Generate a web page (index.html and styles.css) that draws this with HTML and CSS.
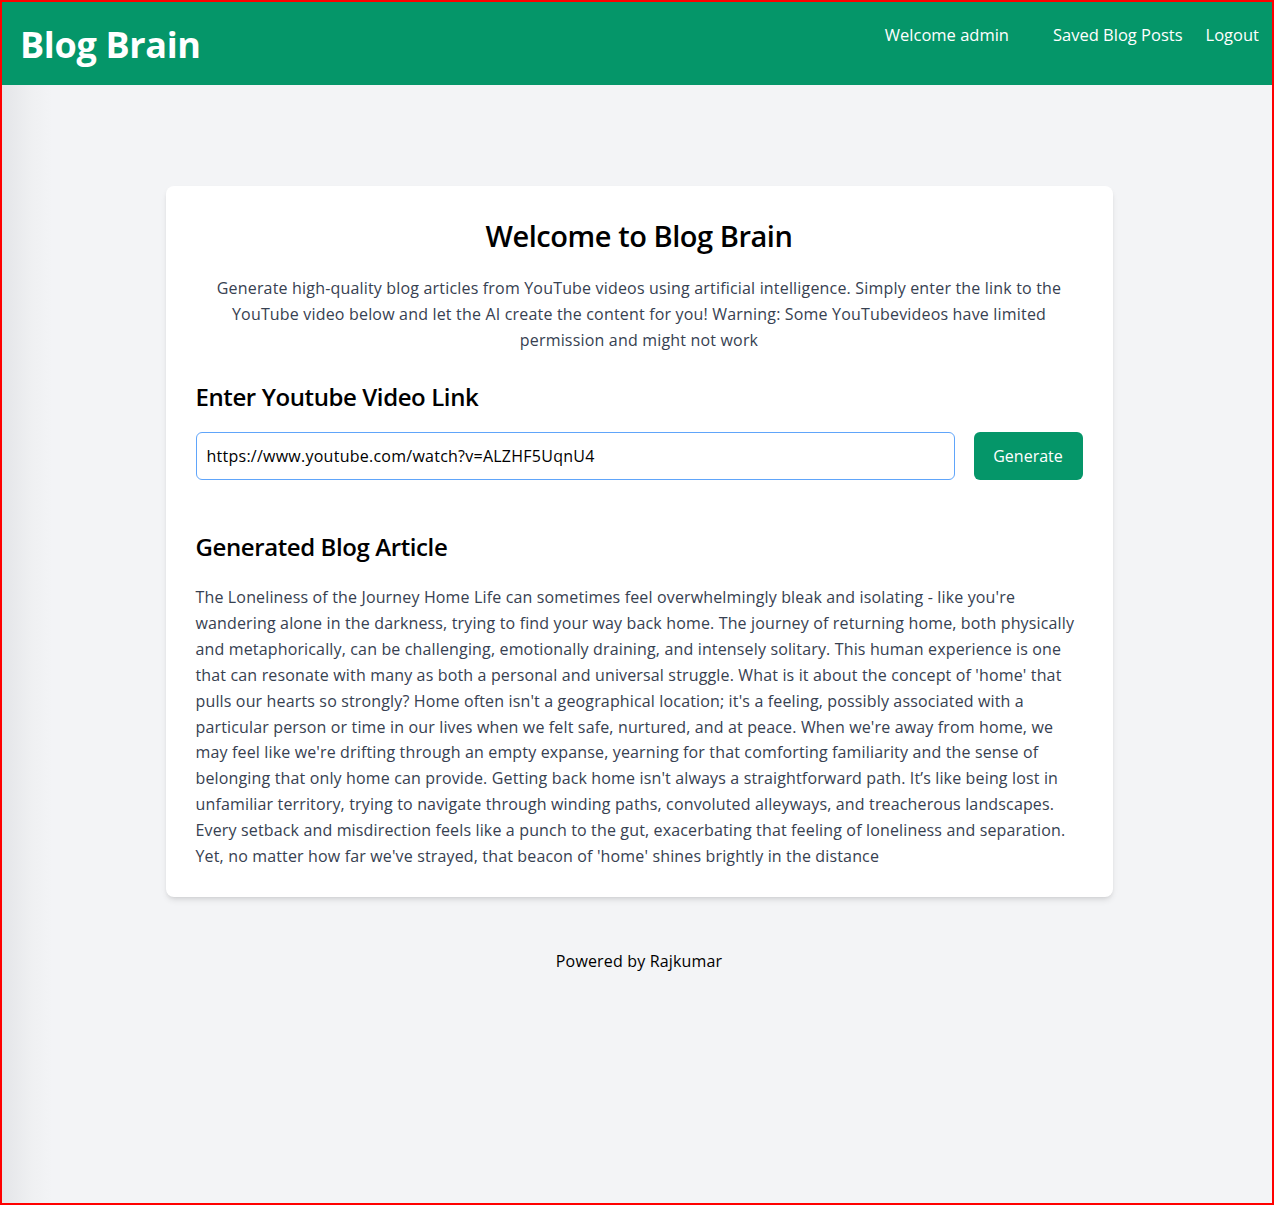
FILE: index.html
```html
<!DOCTYPE html>
<html lang="en">
<head>
<meta charset="utf-8">
<title>Blog Brain</title>
<link rel="stylesheet" href="styles.css">
</head>
<body>
<div class="frame">
  <header class="topbar">
    <h1 class="brand">Blog Brain</h1>
    <nav class="nav">
      <a class="nav-link nav-welcome" href="#">Welcome admin</a>
      <a class="nav-link" href="#">Saved Blog Posts</a>
      <a class="nav-link" href="#">Logout</a>
    </nav>
  </header>
  <main class="main">
    <section class="card">
      <h2 class="card-title">Welcome to Blog Brain</h2>
      <p class="intro">Generate high-quality blog articles from YouTube videos using artificial intelligence. Simply enter the link to the YouTube video below and let the AI create the content for you! Warning: Some YouTubevideos have limited permission and might not work</p>
      <h3 class="section-title">Enter Youtube Video Link</h3>
      <div class="form-row">
        <input class="link-input" type="text" value="https://www.youtube.com/watch?v=ALZHF5UqnU4">
        <button class="btn" type="button">Generate</button>
      </div>
      <h3 class="section-title article-title">Generated Blog Article</h3>
      <p class="article">The Loneliness of the Journey Home Life can sometimes feel overwhelmingly bleak and isolating - like you're wandering alone in the darkness, trying to find your way back home. The journey of returning home, both physically and metaphorically, can be challenging, emotionally draining, and intensely solitary. This human experience is one that can resonate with many as both a personal and universal struggle. What is it about the concept of 'home' that pulls our hearts so strongly? Home often isn't a geographical location; it's a feeling, possibly associated with a particular person or time in our lives when we felt safe, nurtured, and at peace. When we're away from home, we may feel like we're drifting through an empty expanse, yearning for that comforting familiarity and the sense of belonging that only home can provide. Getting back home isn't always a straightforward path. It’s like being lost in unfamiliar territory, trying to navigate through winding paths, convoluted alleyways, and treacherous landscapes. Every setback and misdirection feels like a punch to the gut, exacerbating that feeling of loneliness and separation. Yet, no matter how far we've strayed, that beacon of 'home' shines brightly in the distance</p>
    </section>
    <footer class="footer">Powered by Rajkumar</footer>
  </main>
</div>
</body>
</html>
```

FILE: styles.css
```css
* { box-sizing: border-box; }
html, body { margin: 0; padding: 0; }
body {
  font-family: "Open Sans", "Noto Sans", sans-serif;
  color: #000;
}
.frame {
  height: 1205px;
  border: 2px solid #ff0000;
  background: linear-gradient(to right, #e4e5e8 0px, #eff0f2 30px, #f3f4f6 50px);
  display: flex;
  flex-direction: column;
}
.topbar {
  background: #059669;
  height: 83px;
  display: flex;
  justify-content: space-between;
  align-items: flex-start;
  padding: 0 13px 0 18px;
  color: #fff;
}
.brand {
  margin: 0;
  font-size: 36px;
  font-weight: 700;
  line-height: 1;
  padding-top: 25px;
  letter-spacing: -0.35px;
}
.nav {
  display: flex;
  gap: 23px;
  padding-top: 21px;
}
.nav-link {
  color: #fff;
  text-decoration: none;
  font-size: 16.5px;
  line-height: 24px;
}
.nav-welcome { margin-right: 21px; }
.main {
  flex: 1;
  display: flex;
  flex-direction: column;
  align-items: center;
  padding-left: 4px;
  padding-top: 101px;
}
.card {
  width: 947px;
  background: #fff;
  border-radius: 8px;
  box-shadow: 0 4px 6px -1px rgba(0,0,0,0.1), 0 2px 4px -2px rgba(0,0,0,0.1);
  padding: 30px 30px 27px;
}
.card-title {
  margin: 0;
  text-align: center;
  font-size: 29px;
  font-weight: 600;
  line-height: 40px;
  letter-spacing: -0.45px;
}
.intro {
  margin: 19px 0 0;
  text-align: center;
  color: #374151;
  font-size: 16px;
  line-height: 26px;
  letter-spacing: 0.18px;
  padding: 0 10px;
}
.section-title {
  margin: 28px 0 0;
  font-size: 24px;
  font-weight: 600;
  line-height: 32px;
  letter-spacing: -0.4px;
}
.form-row {
  display: flex;
  gap: 19px;
  margin-top: 19px;
}
.link-input {
  flex: 1;
  height: 48px;
  border: 1px solid #60a5fa;
  border-radius: 6px;
  padding: 0 10px;
  font-family: inherit;
  font-size: 16px;
  letter-spacing: 0.25px;
  color: #000;
  outline: none;
}
.btn {
  width: 109px;
  height: 48px;
  background: #059669;
  color: #fff;
  border: none;
  border-radius: 6px;
  font-family: inherit;
  font-size: 16px;
  cursor: pointer;
}
.article-title { margin-top: 51px; }
.article {
  margin: 22px 0 0;
  color: #374151;
  font-size: 16px;
  line-height: 25.9px;
  letter-spacing: 0.15px;
}
.footer {
  margin-top: 52px;
  font-size: 16px;
  line-height: 24px;
  letter-spacing: 0.16px;
  color: #000;
}
```
